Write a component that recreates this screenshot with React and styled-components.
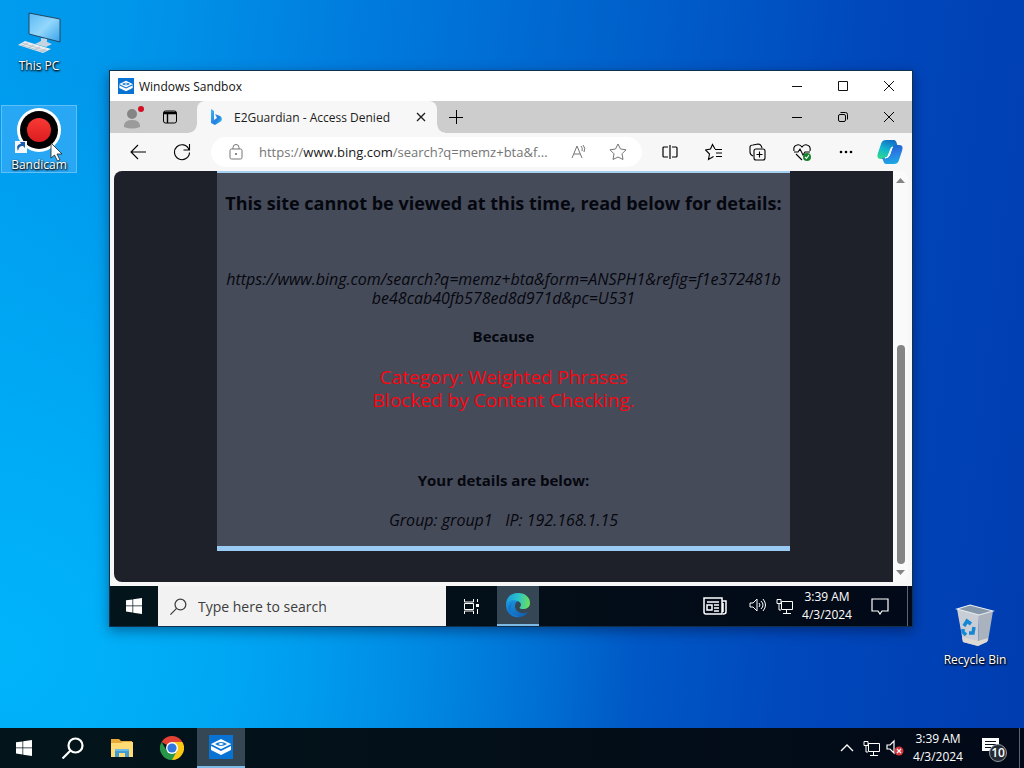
import React from 'react';
import styled, { createGlobalStyle, css } from 'styled-components';

const Global = createGlobalStyle`
  * { box-sizing: border-box; }
  html, body, #root { height: 100%; }
  body { margin: 0; font-family: "Open Sans", "Noto Sans", sans-serif; font-size: 12px; overflow: hidden; }
  button, input { font: inherit; color: inherit; padding: 0; margin: 0; border: 0; background: none; }
  h1, h2, p { margin: 0; }
  svg { display: block; flex: none; }
`;

const Screen = styled.div`
  height: 100%;
  min-height: 560px;
  display: flex;
  flex-direction: column;
  background:
    radial-gradient(ellipse 62% 75% at 0% 85%, #00b4fa 0%, rgba(0, 176, 248, .8) 35%, rgba(0, 160, 240, 0) 100%),
    linear-gradient(97deg, #009cee 0%, #0096ea 12%, #007cde 32%, #0062cc 55%, #0048bc 78%, #003cb0 100%);
`;

const Desktop = styled.main`
  position: relative;
  flex: 1;
  min-height: 0;
`;

const Shortcut = styled.button`
  position: absolute;
  width: 76px;
  display: flex;
  flex-direction: column;
  align-items: center;
  gap: 4px;
  color: #fff;
  line-height: 16px;
  text-shadow: 0 1px 2px #000, 1px 1px 2px #000;
  ${p => p.$spot}
  ${p => p.$selected && css`
    background: #28a8f4;
    outline: 1px solid #5fc0f8;
    outline-offset: -1px;
  `}
`;

const Pointer = styled.svg`
  position: absolute;
  left: 50px;
  top: 142px;
`;

const Window = styled.section`
  position: absolute;
  left: 109px;
  right: 111px;
  top: 70px;
  bottom: 101px;
  display: flex;
  flex-direction: column;
  border: 1px solid #10304c;
  background: #f7f7f7;
  box-shadow: 0 4px 12px rgba(0, 0, 30, .4);
`;

const TitleBar = styled.header`
  display: flex;
  align-items: center;
  height: 30px;
  flex: none;
  padding-left: 8px;
  gap: 5px;
  background: #fff;
  color: #111;
`;

const Controls = styled.div`
  display: flex;
  margin-left: auto;
  height: 100%;
`;

const ControlButton = styled.button`
  width: 46px;
  display: grid;
  place-items: center;
`;

const TabStrip = styled.div`
  display: flex;
  height: 32px;
  flex: none;
  padding-left: 3px;
  background: #cdcdcd;
`;

const StripButton = styled.button`
  width: 38px;
  display: grid;
  place-items: center;
`;

const Tab = styled.div`
  position: relative;
  display: flex;
  align-items: center;
  width: 240px;
  margin-left: 8px;
  padding: 0 10px 0 12px;
  gap: 11px;
  border-radius: 8px 8px 0 0;
  background: #f7f7f7;
  color: #1c1c1c;
  &::before, &::after {
    content: "";
    position: absolute;
    bottom: 0;
    width: 8px;
    height: 8px;
  }
  &::before { right: 100%; background: radial-gradient(circle at 0 0, #cdcdcd 7px, #f7f7f7 8px); }
  &::after { left: 100%; background: radial-gradient(circle at 100% 0, #cdcdcd 7px, #f7f7f7 8px); }
`;

const TabTitle = styled.span`
  flex: 1;
  white-space: nowrap;
`;

const Toolbar = styled.div`
  display: flex;
  align-items: center;
  height: 38px;
  flex: none;
  padding-left: 6px;
`;

const ToolButton = styled.button`
  width: 44px;
  height: 30px;
  display: grid;
  place-items: center;
`;

const Address = styled.div`
  display: flex;
  align-items: center;
  flex: 1;
  min-width: 0;
  height: 30px;
  margin: 0 6px 0 7px;
  padding: 0 14px 0 17px;
  border-radius: 15px;
  background: #fff;
  color: #757575;
  font-size: 13px;
`;

const Url = styled.a`
  flex: 1;
  min-width: 0;
  margin-left: 15px;
  color: inherit;
  text-decoration: none;
  white-space: nowrap;
  b { font-weight: 400; color: #1a1a1a; }
`;

const AddressButton = styled.button`
  width: 40px;
  display: grid;
  place-items: center;
  &:last-child { width: 20px; margin-left: 9px; }
`;

const Viewport = styled.div`
  display: flex;
  flex: 1;
  min-height: 0;
  margin: 0 4px 4px;
  border-radius: 8px;
  overflow: hidden;
`;

const Page = styled.div`
  flex: 1;
  min-width: 0;
  padding: 0 103px 31px;
  overflow: hidden;
  background: #1e212a;
`;

const Notice = styled.article`
  height: 100%;
  border-top: 2px solid #a5d0f2;
  border-bottom: 5px solid #99cbf5;
  background: #464b59;
  color: #05070f;
  text-align: center;
  font-size: 16px;
  line-height: 19px;
`;

const Heading = styled.h1`
  padding-top: 18px;
  font-size: 18px;
  line-height: 24px;
`;

const BlockedUrl = styled.p`
  margin-top: 55px;
  font-style: italic;
  overflow-wrap: anywhere;
`;

const Label = styled.h2`
  margin-top: ${p => p.$gap}px;
  font-size: 15px;
  line-height: 19px;
`;

const Reason = styled.p`
  margin-top: 20px;
  color: #fb0510;
  font-size: 19px;
  font-weight: 500;
  line-height: 23px;
`;

const Details = styled.p`
  margin-top: 21px;
  font-style: italic;
  white-space: pre;
`;

const ScrollBar = styled.div`
  display: flex;
  flex-direction: column;
  align-items: center;
  justify-content: space-between;
  width: 15px;
  padding: 6px 0;
  background: #fafafa;
`;

const Thumb = styled.div`
  width: 8px;
  height: 55%;
  margin: auto 0 6px;
  border-radius: 4px;
  background: #858585;
`;

const Taskbar = styled.footer`
  display: flex;
  height: 40px;
  flex: none;
  background: linear-gradient(90deg, #03151b, #030d18 60%, #020918);
  color: #fff;
`;

const TaskButton = styled.button`
  width: ${p => p.$width || 49}px;
  display: grid;
  place-items: center;
  ${p => p.$active && css`
    background: #354654;
    border-bottom: 2px solid #7dbbe6;
  `}
`;

const Search = styled.label`
  display: flex;
  align-items: center;
  gap: 11px;
  width: 288px;
  padding-left: 12px;
  background: #f2f2f2;
  color: #3d3d3d;
  font-size: 14px;
  input { min-width: 0; flex: 1; outline: 0; }
  input::placeholder { color: #3d3d3d; opacity: 1; }
`;

const Tray = styled.div`
  display: flex;
  align-items: center;
  margin-left: auto;
`;

const TrayButton = styled.button`
  width: ${p => p.$width}px;
  height: 40px;
  display: grid;
  place-items: center;
`;

const Clock = styled.button`
  width: ${p => p.$width}px;
  text-align: center;
  line-height: 18px;
`;

const PeekEdge = styled.div`
  width: 5px;
  height: 40px;
  border-left: 1px solid #5b6572;
`;

const Stroke = ({ size = 16, box = 16, w = 1, children }) => (
  <svg width={size} height={size} viewBox={`0 0 ${box} ${box}`} fill="none" stroke="currentColor" strokeWidth={w} aria-hidden="true">{children}</svg>
);

const SandboxIcon = ({ size }) => (
  <svg width={size} height={size} viewBox="0 0 24 24" aria-hidden="true">
    <path d="M0 0h24v24H0z" fill="#0873d2" />
    <path d="M12 4 22 9v6l-10 5L2 15V9z" fill="#fff" />
    <path d="m2 10 10 5 10-5" fill="none" stroke="#0873d2" strokeWidth="1.6" />
    <path d="M6 9q6-4 12 0-6 4-12 0z" fill="#0873d2" />
    <path d="m9 9 3-1.300L15 9l-3 1.300z" fill="#fff" />
  </svg>
);

const PcIcon = () => (
  <svg width="44" height="42" viewBox="0 0 44 42" aria-hidden="true">
    <defs><linearGradient id="screen" x1="0" y1="0" x2="1" y2="1"><stop stopColor="#5ab9f3" /><stop offset=".5" stopColor="#93d7fc" /><stop offset="1" stopColor="#35a3e9" /></linearGradient></defs>
    <path d="m12 1 31 6v23l-31-8z" fill="url(#screen)" stroke="#244763" />
    <path d="m24 26 6 1v3l5 2-6 3-11-3 6-3z" fill="#c5d5df" />
    <path d="m8 29 26 8-8 4-25-8z" fill="#e8edf0" />
    <path d="m5 31 25 8M3 33l25 7M11 31l-6 3m12-1-6 3m12-1-6 3m12-1-6 3" stroke="#9aafbc" strokeWidth=".6" />
  </svg>
);

const BandicamIcon = () => (
  <svg width="48" height="48" viewBox="0 0 48 48" aria-hidden="true">
    <defs><linearGradient id="rec" x1="0" y1="0" x2="0" y2="1"><stop stopColor="#f83a34" /><stop offset="1" stopColor="#dc1c20" /></linearGradient></defs>
    <circle cx="24" cy="25" r="22" fill="#fff" /><circle cx="24" cy="25" r="19" fill="#020000" />
    <circle cx="24" cy="25" r="12" fill="url(#rec)" />
    <path d="M0 36h12v12H0z" fill="#f4f6f7" />
    <path d="M3 46c-2-5 0-7 3-7l-1-2h5v6l-2-2c-3 0-4 1-5 5z" fill="#1c5da9" />
  </svg>
);

const BinIcon = () => (
  <svg width="40" height="44" viewBox="0 0 40 44" aria-hidden="true">
    <path d="m2 5 22 6-1 31-15-4z" fill="#c9ced6" />
    <path d="m24 11 14-4-5 30-10 5z" fill="#aab2bd" />
    <path d="m2 5 13-4 23 6-14 4z" fill="#8797aa" stroke="#edf0f2" strokeWidth="1.200" />
    <path d="m7 33 16 4 10-3-1 4-9 4-15-4z" fill="#ded9d3" />
    <g fill="none" stroke="#1587d4" strokeWidth="3.500"><path d="m9 22 3-5 4 3M19 23l-1 6-4 0M11 31l-3-3 0-3" /></g>
  </svg>
);

const WindowsIcon = () => (
  <svg width="16" height="16" viewBox="0 0 16 16" fill="#fff" aria-hidden="true"><path d="m0 2.300 6.500-.9v6H0zM7.200 1.300 16 0v7.400H7.200zM0 8.200h6.500v6.200L0 13.500zM7.200 8.200H16V16l-8.800-1.300z" /></svg>
);

const MagnifyIcon = ({ size, w }) => (
  <Stroke size={size} box={22} w={w}><circle cx="13.5" cy="8.5" r="7" /><path d="m8.500 13.500-8 8" /></Stroke>
);

const FolderIcon = () => (
  <svg width="22" height="18" viewBox="0 0 22 18" aria-hidden="true">
    <path d="M0 0h8l2 2h11v16H0z" fill="#e8a93b" /><path d="M0 4h10l2-1h10v15H0z" fill="#ffdb75" />
    <path d="M4 10h14v8h-4v-4H8v4H4z" fill="#3f9bd1" /><path d="M4 10h14v2H4z" fill="#69bbe6" />
  </svg>
);

const ChromeIcon = () => (
  <svg width="24" height="24" viewBox="0 0 24 24" aria-hidden="true">
    <path d="M12 12 1.600 6A12 12 0 0 1 22.400 6z" fill="#e34133" />
    <path d="M12 12V6h10.400A12 12 0 0 1 12 24z" fill="#fbc915" />
    <path d="M1.600 6 7 15l5 2.500 5-2.500-5 9A12 12 0 0 1 1.600 6z" fill="#279847" />
    <circle cx="12" cy="12" r="6" fill="#fff" /><circle cx="12" cy="12" r="4.600" fill="#3078e0" />
  </svg>
);

const EdgeIcon = () => (
  <svg width="26" height="26" viewBox="0 0 26 26" aria-hidden="true">
    <defs><linearGradient id="edgeTop" x1="0" y1=".4" x2="1" y2=".5"><stop stopColor="#1a9be0" /><stop offset=".5" stopColor="#2bc4c9" /><stop offset="1" stopColor="#6be05a" /></linearGradient>
    <linearGradient id="edgeLow" x1="0" y1="0" x2="1" y2="1"><stop stopColor="#189be4" /><stop offset="1" stopColor="#1257ae" /></linearGradient></defs>
    <path d="M1 13C1 5 6 1 13 1c8 0 12 5 12 10 0 4-3 6-7 6-3 0-4-1-3-2 2-2 1-6-4-6-5 0-9 2-10 4z" fill="url(#edgeTop)" />
    <path d="M1 13c0 8 6 12 12 12 5 0 8-2 10-5-6 3-13 0-13-6 0-2 1-4 3-5C7 7 2 9 1 13z" fill="url(#edgeLow)" />
    <path d="M6 14c0 6 4 10 9 11-5 1-9-1-11-4-2-4-1-8 4-11-1 1-2 2-2 4z" fill="#1477ce" />
  </svg>
);

const CopilotIcon = () => (
  <svg width="26" height="24" viewBox="0 0 26 24" aria-hidden="true">
    <defs><linearGradient id="cpA" x1=".6" y1="0" x2=".2" y2="1"><stop stopColor="#126fc4" /><stop offset=".5" stopColor="#12b5cf" /><stop offset="1" stopColor="#2fd98c" /></linearGradient>
    <linearGradient id="cpB" x1=".3" y1="0" x2=".5" y2="1"><stop stopColor="#1f5fc8" /><stop offset=".5" stopColor="#2b7fe4" /><stop offset="1" stopColor="#1aa9e2" /></linearGradient></defs>
    <path d="M9 0h8q2 0 3 4l1 3h-5q-2 0-3 4l-2 5q-1 3-5 3H4q-5 0-3-6L4 4q1-4 5-4z" fill="url(#cpA)" />
    <path d="M17 24H9q-2 0-3-4l-1-2h4q3 0 4-4l2-6q1-3 5-3h2q5 0 3 6l-3 9q-1 4-5 4z" fill="url(#cpB)" />
    <path d="M16 7q-2 0-3 4l-2 5q-1 2-3 2 4 0 5-4l2-6q0-1 1-1z" fill="#f2fcff" stroke="#f2fcff" />
  </svg>
);

const BingIcon = () => (
  <svg width="14" height="16" viewBox="0 0 14 16" aria-hidden="true">
    <defs><linearGradient id="bing" x1="0" y1="0" x2="1" y2="1"><stop stopColor="#43b9f2" /><stop offset=".6" stopColor="#237ee1" /><stop offset="1" stopColor="#42d3ee" /></linearGradient></defs>
    <path d="m2 0 3 2v9l3-2-2-4 5 2c3 2 2 5 0 6l-5 3-4-2z" fill="url(#bing)" />
  </svg>
);

const Minimize = () => <Stroke><path d="M3 8.500h10" /></Stroke>;
const Close = () => <Stroke><path d="m3 3 10 10M13 3 3 13" /></Stroke>;
const NetworkIcon = () => <Stroke size={17} box={17}><path d="M5.500 3.500h11v8h-11zM10.500 12v3M7 15.500h8M1 1.500h4v4h-4zM3 6v6h2" /></Stroke>;
const SpeakerCone = <path d="M1 6h3l4-4v12l-4-4H1z" />;

function WindowControls({ restore }) {
  return (
    <Controls>
      <ControlButton aria-label="Minimize"><Minimize /></ControlButton>
      <ControlButton aria-label="Maximize">
        {restore
          ? <Stroke><rect x="3.500" y="5.500" width="7" height="7" rx="1.500" /><path d="M5.500 3.500h5a2 2 0 0 1 2 2v5" /></Stroke>
          : <Stroke><path d="M3.500 3.500h9v9h-9z" /></Stroke>}
      </ControlButton>
      <ControlButton aria-label="Close"><Close /></ControlButton>
    </Controls>
  );
}

function BrowserTabs() {
  return (
    <TabStrip>
      <StripButton aria-label="Profile">
        <svg width="24" height="24" viewBox="0 0 24 24" aria-hidden="true">
          <circle cx="12" cy="9" r="5" fill="#858585" /><path d="M4 22v-2q1-5 8-5t8 5v2q-8 3-16 0z" fill="#9b9b9b" /><circle cx="21" cy="4" r="3" fill="#d40f24" />
        </svg>
      </StripButton>
      <StripButton aria-label="Tab actions"><Stroke><rect x="1.500" y="2" width="13" height="12" rx="2" /><path d="M2 3.500h12M2 4.500h12M5.500 5v9" strokeWidth="1.400" /></Stroke></StripButton>
      <Tab>
        <BingIcon /><TabTitle>E2Guardian - Access Denied</TabTitle>
        <button aria-label="Close tab"><Stroke size={12} box={12} w={1.3}><path d="m2 2 8 8m0-8-8 8" /></Stroke></button>
      </Tab>
      <StripButton aria-label="New tab"><Stroke><path d="M8.500 1v14M1 8.500h14" /></Stroke></StripButton>
      <WindowControls restore />
    </TabStrip>
  );
}

function BrowserToolbar() {
  return (
    <Toolbar>
      <ToolButton aria-label="Back"><Stroke size={18} box={18} w={1.1}><path d="M17 9H2m7-7L2 9l7 7" /></Stroke></ToolButton>
      <ToolButton aria-label="Refresh"><Stroke size={18} box={18} w={1.1}><path d="M16 6.500a7.500 7.500 0 1 0 .5 3M16.500 1v6h-6" /></Stroke></ToolButton>
      <Address>
        <Stroke size={16}><rect x="2" y="5" width="12" height="10" rx="1.500" /><path d="M5 5V3.500a3 3 0 0 1 6 0V5" /><circle cx="8" cy="10" r=".7" fill="currentColor" /></Stroke>
        <Url href="#">https://<b>www.bing.com</b>/search?q=memz+bta&amp;f...</Url>
        <AddressButton aria-label="Read aloud"><Stroke size={18} box={18}><path d="m2 15 5-12 5 12M4 11h6M11 3q2 2 1 5M13 2q3 3 1 7" /></Stroke></AddressButton>
        <AddressButton aria-label="Favorite"><Stroke size={18} box={18}><path d="m9 1 2.500 5 5.500.8-4 4 1 5.700L9 14l-5 2.500 1-5.700-4-4L6.500 6z" /></Stroke></AddressButton>
      </Address>
      <ToolButton aria-label="Split screen"><Stroke w={1.2}><path d="M6 3H2q-1 0-1 1v8q0 1 1 1h4M10 3h4q1 0 1 1v8q0 1-1 1h-4M8 1v14" /></Stroke></ToolButton>
      <ToolButton aria-label="Favorites"><Stroke size={18} box={18} w={1.1}><path d="M10 6 7.500 1.500 5.500 6l-5 1 4 4-1 5.500 5-3M10 6.500h7M11 10h6M11 13.500h6" /></Stroke></ToolButton>
      <ToolButton aria-label="Collections"><Stroke size={18} box={18} w={1.1}><path d="M4 13Q1 12 1 9V4q0-2 3-2l5-1q3 0 4 4" /><rect x="5" y="6" width="11" height="11" rx="2" /><path d="M10.500 8.500v6M7.500 11.500h6" /></Stroke></ToolButton>
      <ToolButton aria-label="Browser essentials"><Stroke size={18} box={18} w={1.1}><path d="M1 8Q0 3 4 2q3-1 5 2 2-3 5-2 4 1 3 6M1 9h4l2-3 3 6 2-3h5M3 11l6 6" /><circle cx="14" cy="14" r="4" fill="#16812c" stroke="none" /><path d="m12 14 1.500 1.500L16 12" stroke="#fff" /></Stroke></ToolButton>
      <ToolButton aria-label="More"><svg width="16" height="16" viewBox="0 0 16 16"><circle cx="3" cy="8" r="1.300" /><circle cx="8" cy="8" r="1.300" /><circle cx="13" cy="8" r="1.300" /></svg></ToolButton>
      <ToolButton aria-label="Copilot"><CopilotIcon /></ToolButton>
    </Toolbar>
  );
}

function BlockedPage() {
  return (
    <Viewport>
      <Page>
        <Notice>
          <Heading>This site cannot be viewed at this time, read below for details:</Heading>
          <BlockedUrl>https://www.bing.com/search?q=memz+bta&amp;form=ANSPH1&amp;refig=f1e372481b<br />be48cab40fb578ed8d971d&amp;pc=U531</BlockedUrl>
          <Label $gap={19}>Because</Label>
          <Reason>Category: Weighted Phrases<br />Blocked by Content Checking.</Reason>
          <Label $gap={59}>Your details are below:</Label>
          <Details>{'Group: group1   IP: 192.168.1.15'}</Details>
        </Notice>
      </Page>
      <ScrollBar>
        <svg width="9" height="6" viewBox="0 0 9 6"><path d="M0 6 4.500 1 9 6z" fill="#858585" /></svg>
        <Thumb />
        <svg width="9" height="6" viewBox="0 0 9 6"><path d="M0 0 4.500 5 9 0z" fill="#858585" /></svg>
      </ScrollBar>
    </Viewport>
  );
}

function SandboxTaskbar() {
  return (
    <Taskbar>
      <TaskButton $width={48} aria-label="Start"><WindowsIcon /></TaskButton>
      <Search><MagnifyIcon size={17} w={1.6} /><input aria-label="Search" placeholder="Type here to search" /></Search>
      <TaskButton $width={51} aria-label="Task view"><Stroke size={17} box={17}><path d="M1.500 1v3h9V1M1.500 16v-3h9v3M1.500 5.500h9v6h-9zM14.500 1v3M14.500 11v5" /><path d="M13 6h3v3h-3z" fill="currentColor" stroke="none" /></Stroke></TaskButton>
      <TaskButton $width={42} $active aria-label="Edge"><EdgeIcon /></TaskButton>
      <Tray>
        <TrayButton $width={68} aria-label="News"><Stroke size={24} box={24} w={1.5}><path d="M1 4h18v16H3q-2 0-2-2zM19 7h4v11q0 2-3 2M20 9v9M4 8h12M4 11h5v5H4zM11 11h5M11 14h5M11 17h5" /></Stroke></TrayButton>
        <TrayButton $width={18} aria-label="Volume"><Stroke size={18} box={18}>{SpeakerCone}<path d="M10 6q2 2 0 4M12 4q4 4 0 8M14 2q5 6 0 12" /></Stroke></TrayButton>
        <TrayButton $width={34} aria-label="Network"><NetworkIcon /></TrayButton>
        <Clock $width={52}><time>3:39 AM<br />4/3/2024</time></Clock>
        <TrayButton $width={54} aria-label="Notifications"><Stroke size={18} box={18} w={1.2}><path d="M1 2h16v12h-6l-2 3-2-3H1z" /></Stroke></TrayButton>
        <PeekEdge />
      </Tray>
    </Taskbar>
  );
}

function HostTaskbar() {
  return (
    <Taskbar>
      <TaskButton $width={48} aria-label="Start"><WindowsIcon /></TaskButton>
      <TaskButton aria-label="Search"><MagnifyIcon size={22} w={2.2} /></TaskButton>
      <TaskButton $width={50} aria-label="File Explorer"><FolderIcon /></TaskButton>
      <TaskButton $width={50} aria-label="Chrome"><ChromeIcon /></TaskButton>
      <TaskButton $width={48} $active aria-label="Windows Sandbox"><SandboxIcon size={24} /></TaskButton>
      <Tray>
        <TrayButton $width={24} aria-label="Hidden icons"><Stroke w={1.3}><path d="m2 11 6-6 6 6" /></Stroke></TrayButton>
        <TrayButton $width={24} aria-label="Network"><NetworkIcon /></TrayButton>
        <TrayButton $width={24} aria-label="Muted"><Stroke size={18} box={18} w={1.2}>{SpeakerCone}<circle cx="13" cy="12" r="4.500" fill="#d9343c" stroke="none" /><path d="m11 10 4 4m0-4-4 4" /></Stroke></TrayButton>
        <Clock $width={62}><time>3:39 AM<br />4/3/2024</time></Clock>
        <TrayButton $width={50} aria-label="10 notifications">
          <svg width="28" height="28" viewBox="0 0 28 28">
            <path d="M2 4h17v13h-6l-3 3v-3H2z" fill="#fff" /><path d="M5 7.500h11M5 10.500h11M5 13.500h11" stroke="#07101b" />
            <circle cx="18" cy="19" r="8.500" fill="#252b34" stroke="#9299a1" />
            <text x="18" y="23" fill="#fff" fontSize="12" fontWeight="600" textAnchor="middle">10</text>
          </svg>
        </TrayButton>
        <PeekEdge />
      </Tray>
    </Taskbar>
  );
}

const pcSpot = css`left: 1px; top: 12px;`;
const bandicamSpot = css`left: 1px; top: 105px;`;
const binSpot = css`right: 11px; bottom: 60px;`;

export default function App() {
  return (
    <Screen>
      <Global />
      <Desktop>
        <Shortcut $spot={pcSpot}><PcIcon />This PC</Shortcut>
        <Shortcut $spot={bandicamSpot} $selected><BandicamIcon />Bandicam</Shortcut>
        <Shortcut $spot={binSpot}><BinIcon />Recycle Bin</Shortcut>
        <Window>
          <TitleBar><SandboxIcon size={16} />Windows Sandbox<WindowControls /></TitleBar>
          <BrowserTabs />
          <BrowserToolbar />
          <BlockedPage />
          <SandboxTaskbar />
        </Window>
        <Pointer width="13" height="20" viewBox="0 0 13 20"><path d="M1 1v15l3.500-3 3 6 2.500-1-3-6h5z" fill="#fff" stroke="#222" strokeWidth=".8" /></Pointer>
      </Desktop>
      <HostTaskbar />
    </Screen>
  );
}
